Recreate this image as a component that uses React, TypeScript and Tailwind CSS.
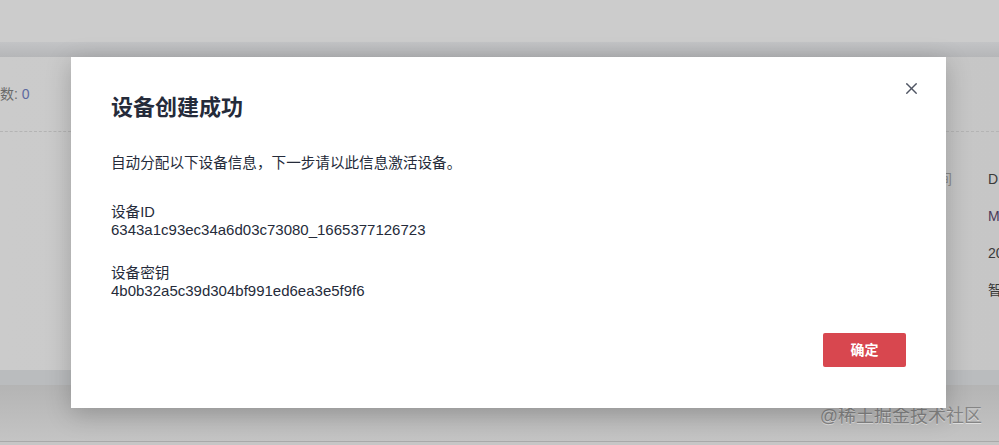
import React from 'react';
import { X } from 'lucide-react';

const font = { fontFamily: '"Liberation Sans", "Noto Sans CJK SC", sans-serif' };

const App = () => {
  return (
    <div className="relative w-[999px] h-[445px] overflow-hidden bg-[#c8c8c8]" style={font}>
      {/* page behind the mask */}
      <div className="h-[42px] bg-[#cccccc]" />
      <div className="h-[15px] bg-gradient-to-b from-[#c3c4c6] to-[#b5b6b8]" />
      <div className="h-[313px] flex bg-gradient-to-r from-[#cbcbcb] via-[#c9c9c9] to-[#c6c6c6]">
        <div className="w-[71px] shrink-0 flex flex-col">
          <div className="h-[75px] border-b border-dashed border-[#b4b4b4] flex items-center">
            <span className="text-[14px] text-[#6a6a6a]">数: <span className="text-[#5d69a0]">0</span></span>
          </div>
        </div>
        <div className="flex-1" />
        <div className="w-[53px] shrink-0 flex flex-col">
          <div className="h-[75px] border-b border-dashed border-[#b4b4b4]" />
          <div className="flex pt-[37px]">
            <div className="w-[50px] -ml-[8px] shrink-0 text-[14px] text-[#8a8a8a] leading-[20px]">
              <div>间</div>
            </div>
            <div className="flex flex-col gap-[17px] text-[14px] leading-[20px] text-[#3a3a3a] whitespace-nowrap">
              <div>D</div>
              <div className="text-[#4b3a5a]">M</div>
              <div>20</div>
              <div>智</div>
            </div>
          </div>
        </div>
      </div>
      <div className="h-[15px] bg-[#babcbe]" />
      <div className="h-[56px] bg-gradient-to-b from-[#b4b4b4] to-[#c4c4c4] flex justify-end items-center pr-[17px] pt-[6px]">
        <span className="text-[18px] text-[#858585] [text-shadow:0_1px_0_rgba(255,255,255,0.5)]">@稀土掘金技术社区</span>
      </div>
      <div className="h-[1px] bg-[#a9a9a9]" />
      <div className="h-[3px] bg-[#c6c6c6]" />

      {/* modal */}
      <div className="absolute left-[71px] top-[57px] w-[875px] h-[351px] bg-white shadow-[0_6px_24px_rgba(0,0,0,0.22)] px-[40px] pt-[36px]">
        <button className="absolute right-[25px] top-[22px] text-[#4f5563]">
          <X size={19} strokeWidth={1.7} />
        </button>
        <h2 className="text-[22px] font-bold leading-[30px] text-[#252b3a]">设备创建成功</h2>
        <p className="mt-[30px] text-[14.6px] leading-[20px] text-[#252b3a]">自动分配以下设备信息，下一步请以此信息激活设备。</p>
        <div className="mt-[31px] leading-[17px] text-[#252b3a]">
          <div className="text-[14.6px]">设备ID</div>
          <div className="text-[15px]">6343a1c93ec34a6d03c73080_1665377126723</div>
        </div>
        <div className="mt-[27px] leading-[17px] text-[#252b3a]">
          <div className="text-[14.6px]">设备密钥</div>
          <div className="text-[15px]">4b0b32a5c39d304bf991ed6ea3e5f9f6</div>
        </div>
        <div className="absolute right-[40px] bottom-[41px]">
          <button className="w-[83px] h-[34px] rounded-[2px] bg-[#d8474f] text-white text-[14px] font-bold">确定</button>
        </div>
      </div>
    </div>
  );
};

export default App;
